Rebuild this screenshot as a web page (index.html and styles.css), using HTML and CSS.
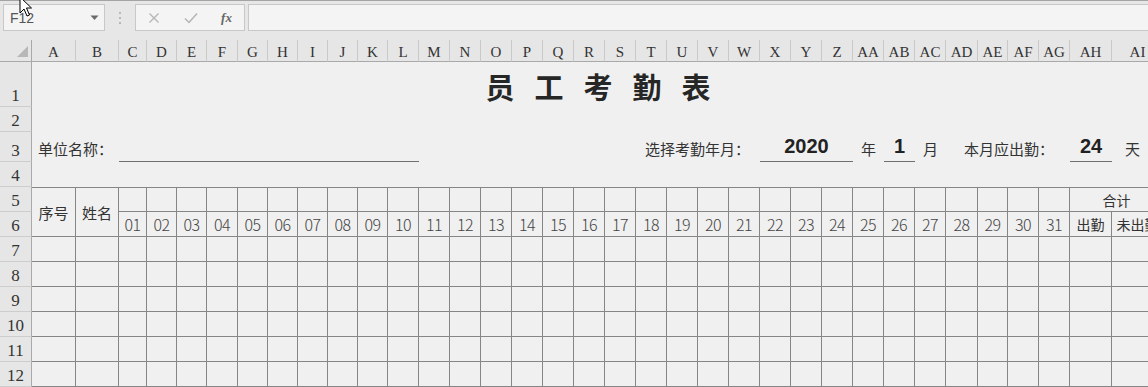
FILE: index.html
```html
<!DOCTYPE html>
<html lang="zh-CN">
<head>
<meta charset="utf-8">
<title>员工考勤表</title>
<link rel="stylesheet" href="styles.css">
</head>
<body>
<div class="toolbar">
  <div class="namebox"><span>F12</span><svg class="dd" width="9" height="6" viewBox="0 0 9 6"><path d="M0.5 0.5 L8.5 0.5 L4.5 5 Z" fill="#6a6a6a"/></svg></div>
  <div class="grip"><svg width="4" height="14" viewBox="0 0 4 14"><circle cx="2" cy="2" r="1" fill="#a8a8a8"/><circle cx="2" cy="7" r="1" fill="#a8a8a8"/><circle cx="2" cy="12" r="1" fill="#a8a8a8"/></svg></div>
  <div class="fxbox">
    <span class="fxbtn"><svg width="12" height="12" viewBox="0 0 12 12"><path d="M1.5 1.5 L10.5 10.5 M10.5 1.5 L1.5 10.5" stroke="#b4b4b4" stroke-width="1.3" fill="none"/></svg></span>
    <span class="fxbtn"><svg width="14" height="12" viewBox="0 0 14 12"><path d="M1 6.5 L5 10.5 L13 1.5" stroke="#b4b4b4" stroke-width="1.5" fill="none"/></svg></span>
    <span class="fxbtn fx">fx</span>
  </div>
  <div class="formula"></div>
</div>

<div class="sheet">
  <div class="corner"><svg width="31" height="21" viewBox="0 0 31 21"><polygon points="28,6 28,17 17,17" fill="#b7b7b7"/></svg></div>
  <div class="ch">A</div><div class="ch">B</div><div class="ch">C</div><div class="ch">D</div><div class="ch">E</div><div class="ch">F</div><div class="ch">G</div><div class="ch">H</div><div class="ch">I</div><div class="ch">J</div><div class="ch">K</div><div class="ch">L</div><div class="ch">M</div><div class="ch">N</div><div class="ch">O</div><div class="ch">P</div><div class="ch">Q</div><div class="ch">R</div><div class="ch">S</div><div class="ch">T</div><div class="ch">U</div><div class="ch">V</div><div class="ch">W</div><div class="ch">X</div><div class="ch">Y</div><div class="ch">Z</div><div class="ch">AA</div><div class="ch">AB</div><div class="ch">AC</div><div class="ch">AD</div><div class="ch">AE</div><div class="ch">AF</div><div class="ch">AG</div><div class="ch">AH</div><div class="ch">AI</div>

  <div class="rh">1</div>
  <div class="title">员工考勤表</div>

  <div class="rh">2</div>
  <div class="blank"></div>

  <div class="rh">3</div>
  <div class="lbl unit-label">单位名称：</div>
  <div class="uline unit-line"></div>
  <div class="lbl month-label">选择考勤年月：</div>
  <div class="num uline year-val">2020</div>
  <div class="lbl year-unit">年</div>
  <div class="num uline month-val">1</div>
  <div class="lbl month-unit">月</div>
  <div class="lbl days-label">本月应出勤：</div>
  <div class="num uline days-val">24</div>
  <div class="lbl days-unit">天</div>

  <div class="rh">4</div>
  <div class="blank"></div>

  <div class="rh">5</div>
  <div class="b t two txt">序号</div>
  <div class="b t two txt">姓名</div>
  <div class="b t"></div><div class="b t"></div><div class="b t"></div><div class="b t"></div><div class="b t"></div><div class="b t"></div><div class="b t"></div><div class="b t"></div><div class="b t"></div><div class="b t"></div><div class="b t"></div><div class="b t"></div><div class="b t"></div><div class="b t"></div><div class="b t"></div><div class="b t"></div><div class="b t"></div><div class="b t"></div><div class="b t"></div><div class="b t"></div><div class="b t"></div><div class="b t"></div><div class="b t"></div><div class="b t"></div><div class="b t"></div><div class="b t"></div><div class="b t"></div><div class="b t"></div><div class="b t"></div><div class="b t"></div><div class="b t"></div>
  <div class="b t total sm">合计</div>

  <div class="rh">6</div>
  <div class="b d">01</div><div class="b d">02</div><div class="b d">03</div><div class="b d">04</div><div class="b d">05</div><div class="b d">06</div><div class="b d">07</div><div class="b d">08</div><div class="b d">09</div><div class="b d">10</div><div class="b d">11</div><div class="b d">12</div><div class="b d">13</div><div class="b d">14</div><div class="b d">15</div><div class="b d">16</div><div class="b d">17</div><div class="b d">18</div><div class="b d">19</div><div class="b d">20</div><div class="b d">21</div><div class="b d">22</div><div class="b d">23</div><div class="b d">24</div><div class="b d">25</div><div class="b d">26</div><div class="b d">27</div><div class="b d">28</div><div class="b d">29</div><div class="b d">30</div><div class="b d">31</div>
  <div class="b sm">出勤</div><div class="b sm">未出勤</div>

  <div class="rh">7</div>
  <div class="b"></div><div class="b"></div><div class="b"></div><div class="b"></div><div class="b"></div><div class="b"></div><div class="b"></div><div class="b"></div><div class="b"></div><div class="b"></div><div class="b"></div><div class="b"></div><div class="b"></div><div class="b"></div><div class="b"></div><div class="b"></div><div class="b"></div><div class="b"></div><div class="b"></div><div class="b"></div><div class="b"></div><div class="b"></div><div class="b"></div><div class="b"></div><div class="b"></div><div class="b"></div><div class="b"></div><div class="b"></div><div class="b"></div><div class="b"></div><div class="b"></div><div class="b"></div><div class="b"></div><div class="b"></div><div class="b"></div>

  <div class="rh">8</div>
  <div class="b"></div><div class="b"></div><div class="b"></div><div class="b"></div><div class="b"></div><div class="b"></div><div class="b"></div><div class="b"></div><div class="b"></div><div class="b"></div><div class="b"></div><div class="b"></div><div class="b"></div><div class="b"></div><div class="b"></div><div class="b"></div><div class="b"></div><div class="b"></div><div class="b"></div><div class="b"></div><div class="b"></div><div class="b"></div><div class="b"></div><div class="b"></div><div class="b"></div><div class="b"></div><div class="b"></div><div class="b"></div><div class="b"></div><div class="b"></div><div class="b"></div><div class="b"></div><div class="b"></div><div class="b"></div><div class="b"></div>

  <div class="rh">9</div>
  <div class="b"></div><div class="b"></div><div class="b"></div><div class="b"></div><div class="b"></div><div class="b"></div><div class="b"></div><div class="b"></div><div class="b"></div><div class="b"></div><div class="b"></div><div class="b"></div><div class="b"></div><div class="b"></div><div class="b"></div><div class="b"></div><div class="b"></div><div class="b"></div><div class="b"></div><div class="b"></div><div class="b"></div><div class="b"></div><div class="b"></div><div class="b"></div><div class="b"></div><div class="b"></div><div class="b"></div><div class="b"></div><div class="b"></div><div class="b"></div><div class="b"></div><div class="b"></div><div class="b"></div><div class="b"></div><div class="b"></div>

  <div class="rh">10</div>
  <div class="b"></div><div class="b"></div><div class="b"></div><div class="b"></div><div class="b"></div><div class="b"></div><div class="b"></div><div class="b"></div><div class="b"></div><div class="b"></div><div class="b"></div><div class="b"></div><div class="b"></div><div class="b"></div><div class="b"></div><div class="b"></div><div class="b"></div><div class="b"></div><div class="b"></div><div class="b"></div><div class="b"></div><div class="b"></div><div class="b"></div><div class="b"></div><div class="b"></div><div class="b"></div><div class="b"></div><div class="b"></div><div class="b"></div><div class="b"></div><div class="b"></div><div class="b"></div><div class="b"></div><div class="b"></div><div class="b"></div>

  <div class="rh">11</div>
  <div class="b"></div><div class="b"></div><div class="b"></div><div class="b"></div><div class="b"></div><div class="b"></div><div class="b"></div><div class="b"></div><div class="b"></div><div class="b"></div><div class="b"></div><div class="b"></div><div class="b"></div><div class="b"></div><div class="b"></div><div class="b"></div><div class="b"></div><div class="b"></div><div class="b"></div><div class="b"></div><div class="b"></div><div class="b"></div><div class="b"></div><div class="b"></div><div class="b"></div><div class="b"></div><div class="b"></div><div class="b"></div><div class="b"></div><div class="b"></div><div class="b"></div><div class="b"></div><div class="b"></div><div class="b"></div><div class="b"></div>

  <div class="rh">12</div>
  <div class="b"></div><div class="b"></div><div class="b"></div><div class="b"></div><div class="b"></div><div class="b"></div><div class="b"></div><div class="b"></div><div class="b"></div><div class="b"></div><div class="b"></div><div class="b"></div><div class="b"></div><div class="b"></div><div class="b"></div><div class="b"></div><div class="b"></div><div class="b"></div><div class="b"></div><div class="b"></div><div class="b"></div><div class="b"></div><div class="b"></div><div class="b"></div><div class="b"></div><div class="b"></div><div class="b"></div><div class="b"></div><div class="b"></div><div class="b"></div><div class="b"></div><div class="b"></div><div class="b"></div><div class="b"></div><div class="b"></div>
</div>

<svg class="cursor" width="14" height="22" viewBox="0 0 14 22"><path d="M1 1 L1 17 L5 13 L8 20 L10.5 19 L7.5 12 L12.5 12 Z" fill="#ffffff" stroke="#000000" stroke-width="1"/></svg>
</body>
</html>
```

FILE: styles.css
```css
* { box-sizing: border-box; }
html, body { margin: 0; padding: 0; }
body {
  width: 1148px;
  height: 387px;
  overflow: hidden;
  position: relative;
  background: #f0f0f0;
  font-family: "Noto Sans CJK SC", "Noto Sans", sans-serif;
  color: #333;
}

/* ---------- formula toolbar ---------- */
.toolbar {
  height: 40px;
  background: #e7e7e7;
  border-top: 1px solid #a4a4a4;
  padding: 3px 0 0 3px;
  display: flex;
  align-items: flex-start;
}
.namebox {
  width: 102px;
  height: 27px;
  background: #f4f4f4;
  border: 1px solid #c8c8c8;
  display: flex;
  align-items: center;
  justify-content: space-between;
  padding: 0 5px 0 6px;
  font-family: "Liberation Sans", sans-serif;
  font-size: 14px;
  color: #555;
}
.grip {
  width: 30px;
  height: 27px;
  display: flex;
  align-items: center;
  justify-content: center;
}
.fxbox {
  width: 110px;
  height: 27px;
  background: #f4f4f4;
  border: 1px solid #c8c8c8;
  display: grid;
  grid-template-columns: 36px 37px 35px;
  align-items: center;
}
.fxbtn {
  display: flex;
  justify-content: center;
  align-items: center;
}
.fx {
  font-family: "Liberation Serif", serif;
  font-style: italic;
  font-weight: 700;
  font-size: 13px;
  color: #666;
}
.formula {
  flex: 1;
  height: 27px;
  margin-left: 3px;
  background: #f4f4f4;
  border: 1px solid #c8c8c8;
  border-right: none;
}

/* ---------- sheet grid ---------- */
.sheet {
  display: grid;
  width: 1164px;
  grid-template-columns:
    32px 44px 43px 28px 30px 30px 31px 30px 30px 30px 30px 30px
    31px 31px 31px 31px 31px 31px 31px 31px 31px 31px 31px 31px 31px 31px 31px 31px 31px 31px
    32px 30px 31px 31px 42px 52px;
  grid-template-rows: 22px 45px 25px 30px 25px repeat(8, 25px);
}

.corner {
  background: #e6e6e6;
  border-right: 1px solid #a9a9a9;
  border-bottom: 1px solid #a9a9a9;
}
.corner svg { display: block; }
.ch {
  background: #e6e6e6;
  border-right: 1px solid #c9c9c9;
  border-bottom: 1px solid #a9a9a9;
  display: flex;
  align-items: center;
  justify-content: center;
  padding-top: 3px;
  font-family: "Liberation Serif", serif;
  font-size: 15px;
  color: #333;
  white-space: nowrap;
}
.rh {
  grid-column: 1;
  background: #e6e6e6;
  border-right: 1px solid #a9a9a9;
  border-bottom: 1px solid #cdcdcd;
  display: flex;
  align-items: flex-end;
  justify-content: center;
  padding-bottom: 2px;
  font-family: "Liberation Serif", serif;
  font-size: 17px;
  line-height: 17px;
  color: #333;
}

.title {
  grid-column: 2 / -1;
  display: flex;
  align-items: center;
  justify-content: center;
  padding-left: 20px;
  padding-top: 2px;
  font-size: 29px;
  font-weight: 700;
  letter-spacing: 20px;
  color: #262626;
}
.blank { grid-column: 2 / -1; }

/* row 3 */
.lbl {
  display: flex;
  align-items: center;
  padding-top: 3px;
  font-size: 15px;
  color: #333;
  white-space: nowrap;
}
.uline { border-bottom: 1px solid #707070; }
.num {
  display: flex;
  align-items: center;
  justify-content: center;
  font-family: "Liberation Sans", sans-serif;
  font-weight: 700;
  font-size: 20px;
  color: #222;
}
.unit-label { grid-column: 2 / 4; padding-left: 6px; }
.unit-line { grid-column: 4 / 14; }
.month-label { grid-column: 20 / 25; justify-content: flex-end; padding-right: 10px; }
.year-val { grid-column: 25 / 28; }
.year-unit { grid-column: 28 / 29; justify-content: center; }
.month-val { grid-column: 29 / 30; }
.month-unit { grid-column: 30 / 31; justify-content: center; }
.days-label { grid-column: 31 / 35; justify-content: flex-end; padding-right: 16px; }
.days-val { grid-column: 35 / 36; }
.days-unit { grid-column: 36 / 37; padding-left: 13px; }

/* bordered attendance table */
.b {
  border-right: 1px solid #868686;
  border-bottom: 1px solid #868686;
}
.t { border-top: 1px solid #868686; }
.two { grid-row: span 2; }
.txt {
  display: flex;
  align-items: center;
  justify-content: center;
  font-size: 15px;
  color: #333;
}
.total { grid-column: span 2; }
.sm {
  display: flex;
  align-items: center;
  justify-content: center;
  font-size: 14px;
  color: #333;
  white-space: nowrap;
  overflow: hidden;
}
.d {
  display: flex;
  align-items: center;
  justify-content: center;
  font-size: 16px;
  font-weight: 300;
  letter-spacing: -0.6px;
  color: #444;
}

.cursor {
  position: absolute;
  left: 19px;
  top: -4px;
}
```
